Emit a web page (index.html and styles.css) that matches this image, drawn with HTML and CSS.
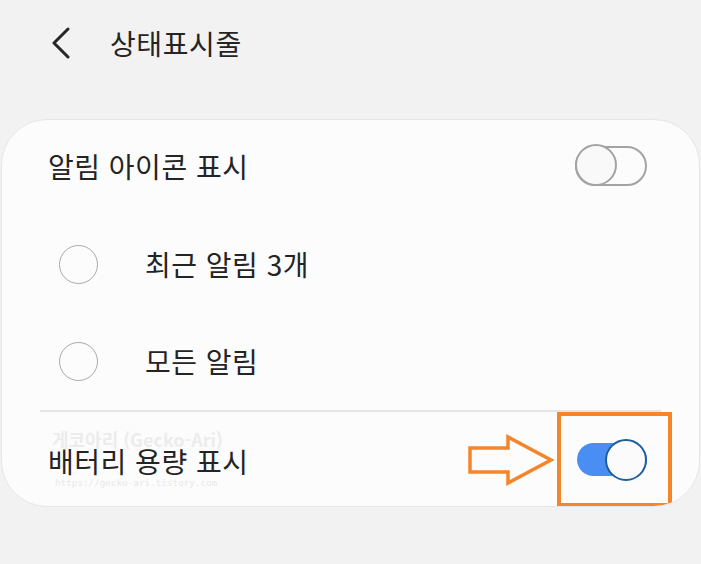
FILE: index.html
```html
<!DOCTYPE html>
<html lang="ko">
	<head>
		<meta charset="UTF-8" />
		<meta name="viewport" content="width=device-width, initial-scale=1.0" />
		<title>상태표시줄</title>
		<link rel="stylesheet" href="styles.css">
	</head>
	<body>
		<header class="header">
			<svg class="back" width="20" height="32" viewBox="0 0 20 32">
				<path d="M17 2 L3 16 L17 30" fill="none" stroke="#262626" stroke-width="3" stroke-linecap="round" stroke-linejoin="round" />
			</svg>
			<h1 class="title">상태표시줄</h1>
		</header>

		<div class="card">
			<div class="row row-first">
				<span class="label">알림 아이콘 표시</span>
				<span class="switch"><span class="knob"></span></span>
			</div>

			<div class="row row-radio">
				<span class="radio"></span>
				<span class="label">최근 알림 3개</span>
			</div>

			<div class="row row-radio">
				<span class="radio"></span>
				<span class="label">모든 알림</span>
			</div>

			<div class="divider"></div>

			<div class="row row-battery">
				<span class="label">배터리 용량 표시</span>
				<span class="switch on"><span class="knob"></span></span>

				<span class="mark mark-name">게코아리 (Gecko-Ari)</span>
				<span class="mark mark-url">https://gecko-ari.tistory.com</span>

				<svg class="arrow" width="90" height="54" viewBox="0 0 90 54">
					<path d="M3 14 H41 V3 L84 26 L41 49 V38 H3 Z" fill="none" stroke="#f5852b" stroke-width="3.5" stroke-linejoin="miter" />
				</svg>
				<span class="highlight"></span>
			</div>
		</div>
	</body>
</html>
```

FILE: styles.css
```css
body {
	margin: 0;
	background-color: #f2f2f2;
	color: #242424;
	font-family: "Noto Sans CJK KR", "Noto Sans", sans-serif;
}

.header {
	display: flex;
	align-items: center;
	height: 86px;
	padding-left: 51px;
	margin-bottom: 33px;
}

.header .back {
	display: block;
}

.title {
	margin: 0 0 0 39px;
	font-weight: 400;
	font-size: 28px;
	letter-spacing: 0.6px;
}

.card {
	margin: 0 1px;
	background-color: #fcfcfc;
	border: 1px solid #e6e6e6;
	border-radius: 46px;
	overflow: hidden;
}

.row {
	position: relative;
	display: flex;
	align-items: center;
	padding: 0 52px 0 46px;
}

.row-first {
	height: 92px;
	padding-bottom: 4px;
	justify-content: space-between;
}

.row-radio {
	height: 97px;
	padding-left: 57px;
}

.row-battery {
	height: 94px;
	justify-content: space-between;
}

.label {
	font-size: 28px;
	line-height: 1.1;
	letter-spacing: 0.5px;
}

.row-battery .label {
	padding-top: 5px;
}

.radio {
	width: 37px;
	height: 37px;
	margin-right: 47px;
	border: 1.5px solid #a9a9a9;
	border-radius: 50%;
}

.divider {
	height: 2px;
	margin: 0 38px;
	background-color: #e5e5e5;
}

.switch {
	position: relative;
	width: 68px;
	height: 36px;
	border: 2px solid #a3a3a3;
	border-radius: 20px;
}

.switch .knob {
	position: absolute;
	top: -4px;
	left: -2px;
	width: 38px;
	height: 38px;
	border: 2px solid #a3a3a3;
	border-radius: 50%;
	background-color: #f9f9f9;
}

.switch.on {
	width: 70px;
	height: 33px;
	border: none;
	background-color: #4a8ef3;
}

.switch.on .knob {
	top: -4px;
	left: auto;
	right: 0;
	border-color: #1d5e9f;
	background-color: #fbfbfb;
}

.mark {
	position: absolute;
	left: 50px;
	color: #ececec;
	line-height: 1;
	white-space: nowrap;
}

.mark-name {
	top: 18px;
	font-size: 18px;
	font-weight: 700;
}

.mark-url {
	top: 66px;
	left: 53px;
	font-family: "DejaVu Sans Mono", monospace;
	font-size: 9.3px;
	color: #e8e8e8;
}

.arrow {
	position: absolute;
	left: 465px;
	top: 22px;
}

.highlight {
	position: absolute;
	left: 555px;
	top: 0;
	width: 107px;
	height: 87px;
	border: 4px solid #f5852b;
}
```
